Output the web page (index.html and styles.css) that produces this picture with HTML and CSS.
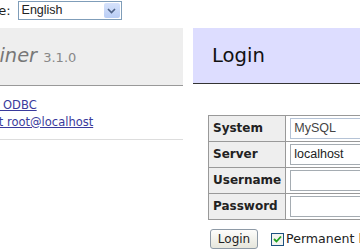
FILE: index.html
```html
<!DOCTYPE html>
<html lang="en">
<head>
  <meta charset="UTF-8">
  <title>Login - Adminer</title>
  <link rel="stylesheet" href="styles.css">
</head>
<body>

<div class="page">
  <div class="lang">
    <span class="lang-label">Language:</span>
    <span class="select">
      <span class="select-value">English</span>
      <span class="select-arrow">
        <svg width="9" height="6" viewBox="0 0 9 6"><path d="M1 1 L4.5 4.5 L8 1" fill="none" stroke="#4d6185" stroke-width="1.6"/></svg>
      </span>
    </span>
  </div>

  <div class="main">
    <div class="menu">
      <h1><a href="#" class="h1-link">Adminer</a> <span class="version">3.1.0</span></h1>
      <p class="links">
        <a href="#">Driver ODBC</a><br>
        <a href="#">Logout root@localhost</a>
      </p>
    </div>

    <div class="content">
      <h2>Login</h2>
      <form>
        <table class="login-table" cellspacing="0">
          <tr>
            <th>System</th>
            <td><span class="field field-select">MySQL</span></td>
          </tr>
          <tr>
            <th>Server</th>
            <td><span class="field">localhost</span></td>
          </tr>
          <tr>
            <th>Username</th>
            <td><span class="field"></span></td>
          </tr>
          <tr>
            <th>Password</th>
            <td><span class="field"></span></td>
          </tr>
        </table>
        <div class="actions">
          <span class="button">Login</span>
          <span class="check">
            <svg width="9" height="8" viewBox="0 0 9 8"><path d="M1 4 L3.5 6.5 L8 1.5" fill="none" stroke="#21a121" stroke-width="1.8"/></svg>
          </span>
          <span class="check-label">Permanent login</span>
        </div>
      </form>
    </div>
  </div>
</div>

</body>
</html>
```

FILE: styles.css
```css
body {
  margin: 0;
  font: 13px/1.25 "DejaVu Sans", Verdana, sans-serif;
  color: #000;
  background: #fff;
  overflow: hidden;
}

a {
  color: #3a3a9c;
}

.page {
  margin-left: -64px;
  width: 560px;
}

/* language bar */
.lang {
  display: flex;
  align-items: flex-start;
  height: 28px;
  padding-top: 1px;
  box-sizing: border-box;
}

.lang-label {
  padding-left: 6px;
  line-height: 19px;
  color: #222;
}

.select {
  display: flex;
  align-items: stretch;
  width: 104px;
  height: 19px;
  margin-left: 7px;
  border: 1px solid #7f9db9;
  box-sizing: border-box;
  background: #fff;
}

.select-value {
  flex: 1;
  padding-left: 3px;
  font: 12.5px/17px "Liberation Sans", Arial, sans-serif;
  color: #222;
}

.select-arrow {
  display: flex;
  align-items: center;
  justify-content: center;
  width: 16px;
  margin: 1px;
  background: linear-gradient(#d6e2fb, #b9cdf5);
  border-radius: 2px;
}

/* page columns */
.main {
  display: flex;
  align-items: flex-start;
}

.menu {
  width: 247px;
  flex: none;
}

h1 {
  margin: 0;
  padding: 15px 19px;
  font-size: 19.4px;
  line-height: 25px;
  font-weight: normal;
  color: #777;
  background: #eee;
  border-bottom: 1px solid #999;
}

.h1-link {
  color: #777;
  text-decoration: none;
  font-style: italic;
}

.version {
  font-size: 13px;
  color: #888;
}

.links {
  margin: 0;
  padding: 11px 13px 9px 28px;
  font-size: 11.5px;
  line-height: 16.5px;
  border-bottom: 1px solid #ddd;
}

.content {
  flex: 1;
  margin-left: 25px;
}

h2 {
  margin: 0 0 31px -15px;
  padding: 15px 19px;
  font-size: 19.6px;
  line-height: 25px;
  font-weight: normal;
  color: #111;
  background: #ddf;
  border-bottom: 1px solid #333;
}

/* login form */
.login-table {
  border-collapse: separate;
  border-top: 1px solid #999;
  border-left: 1px solid #999;
  font-size: 12px;
}

.login-table th,
.login-table td {
  padding: 2px 4px;
  border-right: 1px solid #999;
  border-bottom: 1px solid #999;
  vertical-align: middle;
}

.login-table th {
  background: #eee;
  text-align: left;
  color: #222;
  width: 68px;
}

.field {
  display: block;
  width: 140px;
  height: 21px;
  box-sizing: border-box;
  padding-left: 3px;
  border: 1px solid #a5acb2;
  font: 12.5px/19px "Liberation Sans", Arial, sans-serif;
  color: #222;
}

.field-select {
  border-color: #b5c3d6;
  color: #444;
}

.actions {
  display: flex;
  align-items: center;
  margin-top: 9px;
  padding-left: 2px;
}

.button {
  width: 48px;
  height: 20px;
  box-sizing: border-box;
  border: 1px solid #8e9aa6;
  border-radius: 3px;
  background: linear-gradient(#fdfdfb, #e6e6dc);
  font: 12px/18px "DejaVu Sans", Verdana, sans-serif;
  text-align: center;
  color: #222;
}

.check {
  display: flex;
  align-items: center;
  justify-content: center;
  width: 13px;
  height: 13px;
  box-sizing: border-box;
  margin-left: 13px;
  border: 1px solid #1c5180;
  background: #f4f4f0;
}

.check-label {
  margin-left: 2px;
  font-size: 12.6px;
  color: #222;
  white-space: nowrap;
}
```
